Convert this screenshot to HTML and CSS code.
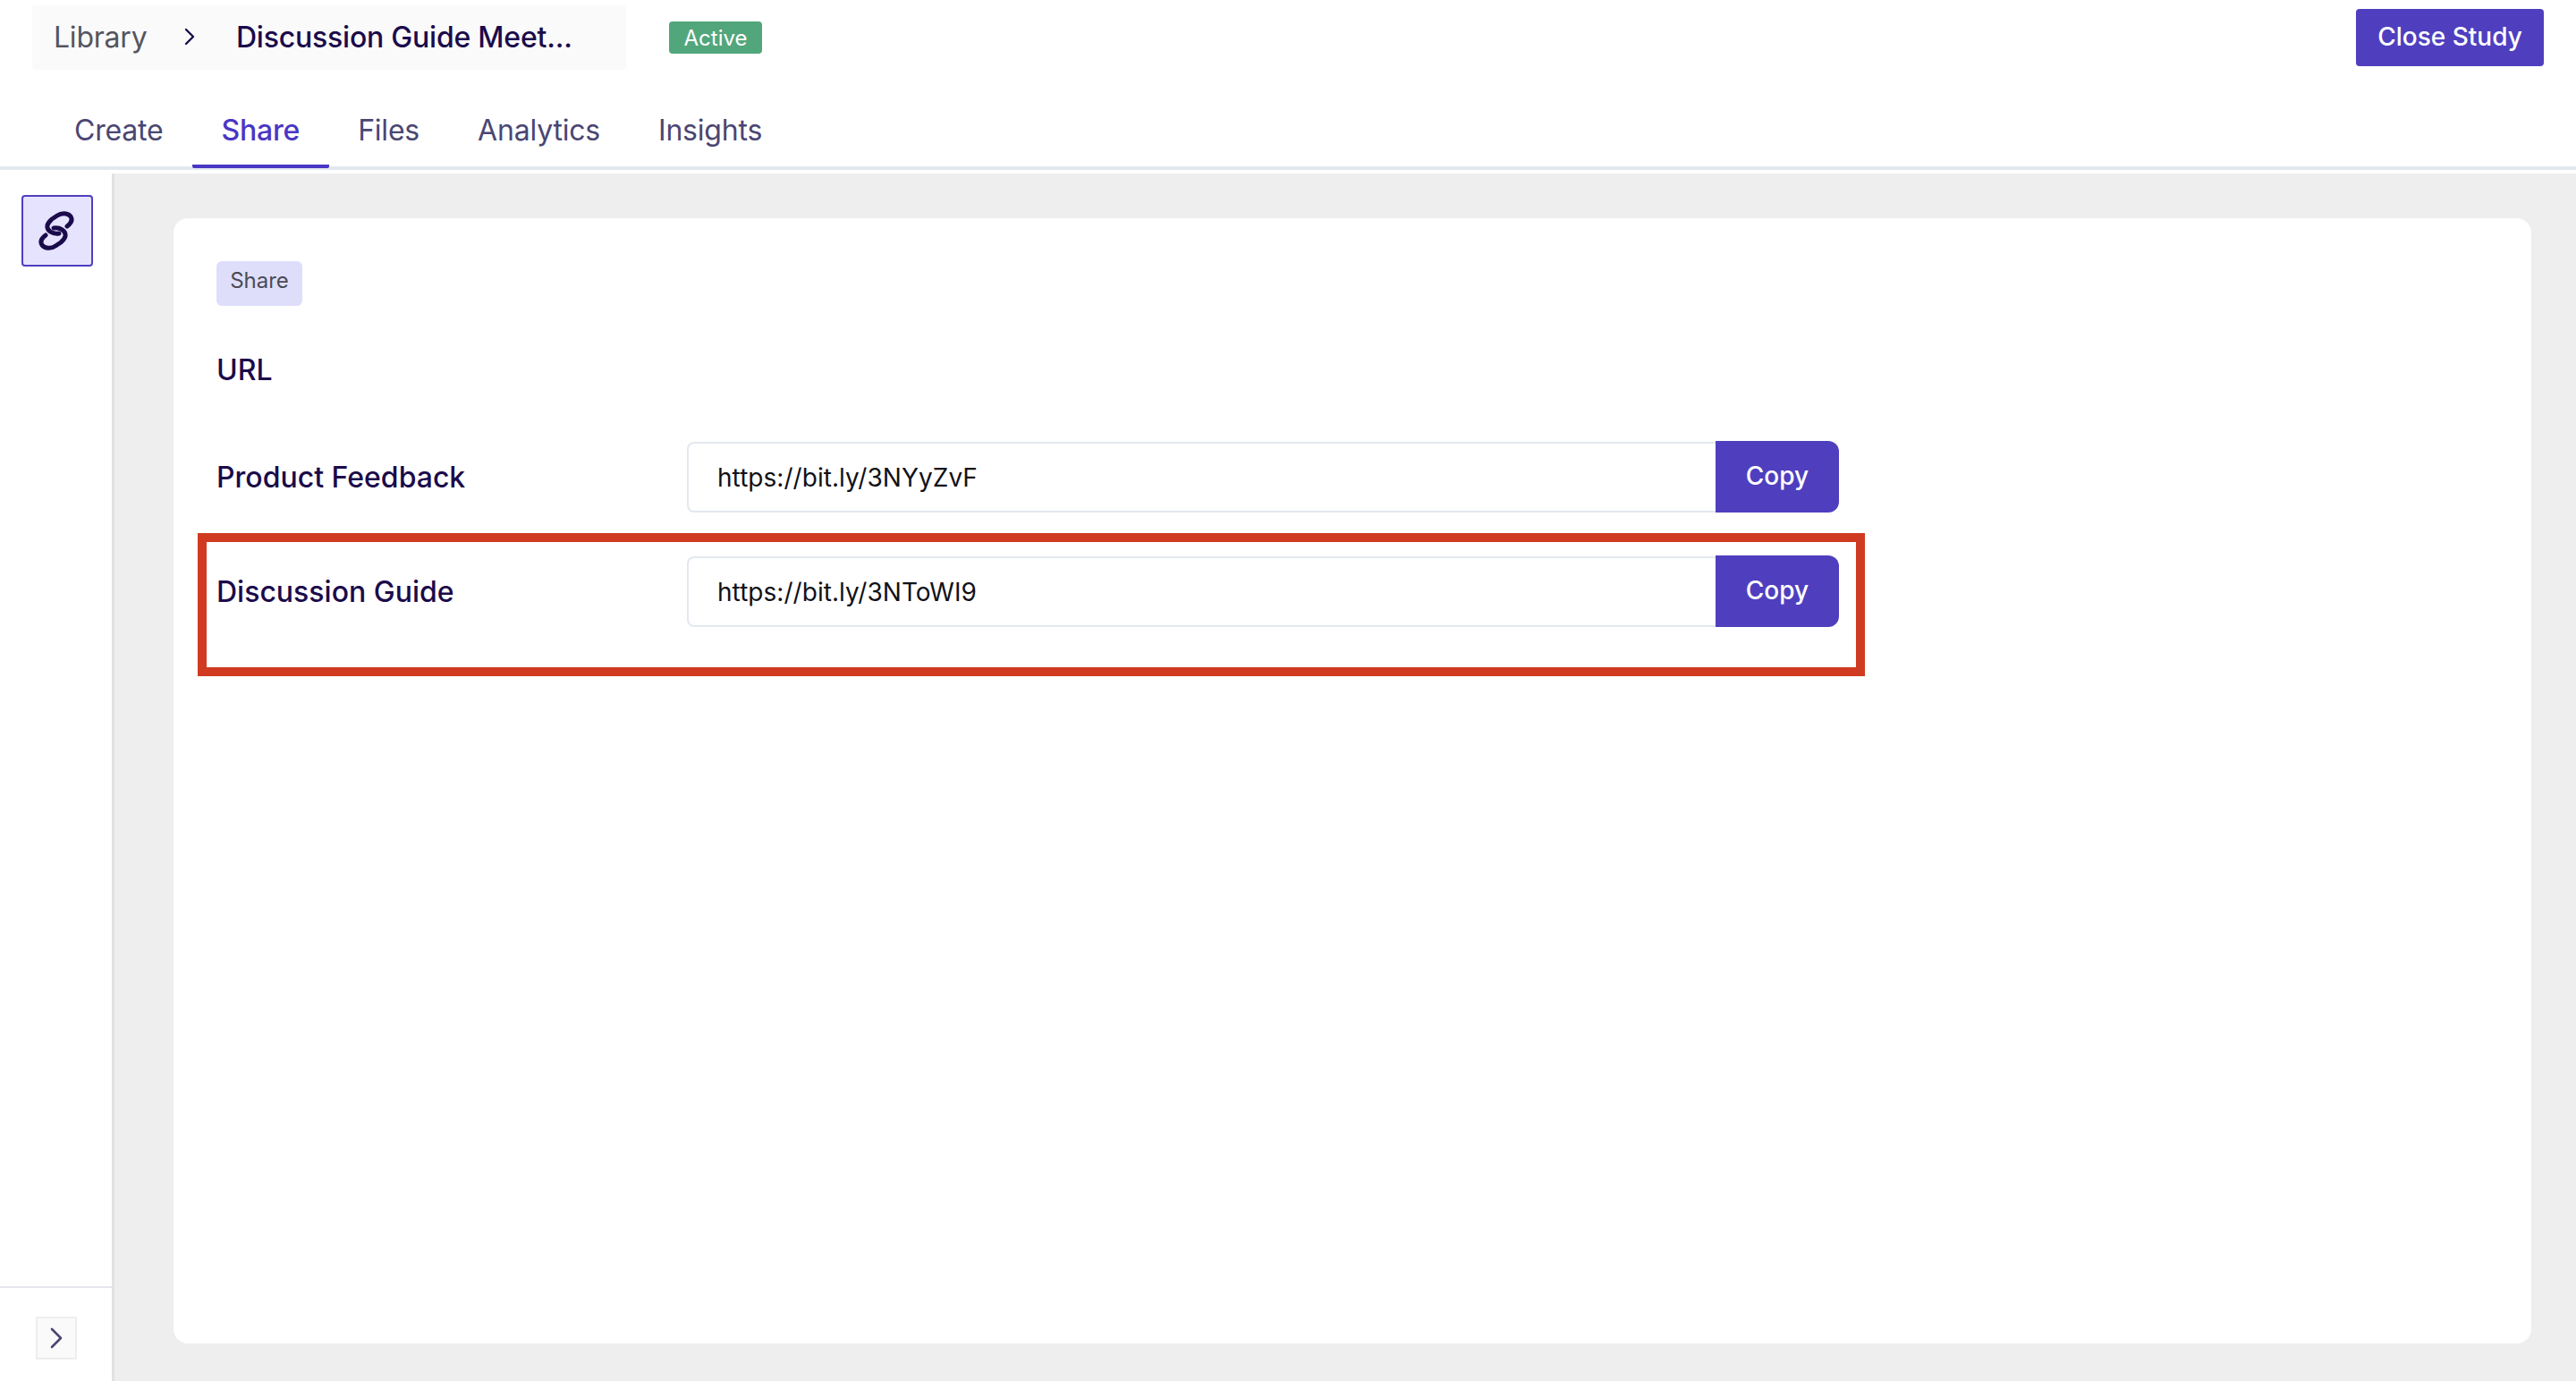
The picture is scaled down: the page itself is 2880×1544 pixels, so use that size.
FILE: index.html
```html
<!DOCTYPE html>
<html lang="en">
<head>
<meta charset="utf-8">
<title>Discussion Guide Meeting - Share</title>
<link rel="stylesheet" href="styles.css">
</head>
<body>
<div class="app">
  <header class="header">
    <div class="topbar">
      <nav class="crumbs">
        <span class="crumb-root">Library</span>
        <svg class="crumb-sep" viewBox="0 0 12 20" width="12" height="20"><path d="M2 2l8 8-8 8" fill="none" stroke="#1b0b4b" stroke-width="2.4" stroke-linecap="round" stroke-linejoin="round"/></svg>
        <span class="crumb-current">Discussion Guide Meet...</span>
      </nav>
      <span class="status">Active</span>
      <button class="close-btn">Close Study</button>
    </div>
    <div class="tabs">
      <a class="tab">Create</a>
      <a class="tab tab-active">Share</a>
      <a class="tab">Files</a>
      <a class="tab">Analytics</a>
      <a class="tab">Insights</a>
    </div>
  </header>
  <div class="body">
    <aside class="sidebar">
      <div class="side-top">
        <button class="side-link">
          <svg viewBox="0 0 50 52" width="50" height="52" fill="none" stroke="#1b0b4b" stroke-width="5" stroke-linecap="round" stroke-linejoin="round">
            <path d="M27 29C20 30 13 26 14 20C14.500 17 17 15 19 13L25 9C30 5.500 37 6 40 10C42.500 14 40 18 36 21"/>
            <path d="M21 23C28 22 35 26 34 32C33.500 35 31 37 29 39L23 43C18 46.500 11 46 8 42C5.500 38 8 34 12 31"/>
          </svg>
        </button>
      </div>
      <div class="side-bottom">
        <button class="side-toggle">
          <svg viewBox="0 0 14 24" width="14" height="24"><path d="M2 2l10 10L2 22" fill="none" stroke="#4a4672" stroke-width="2.6" stroke-linecap="round" stroke-linejoin="round"/></svg>
        </button>
      </div>
    </aside>
    <main class="main">
      <section class="card">
        <span class="tag">Share</span>
        <h2 class="heading">URL</h2>
        <div class="rows">
          <div class="row">
            <label class="row-label">Product Feedback</label>
            <div class="field">
              <span class="field-value">https://bit.ly/3NYyZvF</span>
              <button class="copy">Copy</button>
            </div>
          </div>
          <div class="row">
            <label class="row-label">Discussion Guide</label>
            <div class="field">
              <span class="field-value">https://bit.ly/3NToWI9</span>
              <button class="copy">Copy</button>
            </div>
            <div class="highlight"></div>
          </div>
        </div>
      </section>
    </main>
  </div>
</div>
</body>
</html>
```
FILE: styles.css
```css
* { box-sizing: border-box; }
html, body { margin: 0; padding: 0; height: 100%; }
body { font-family: Inter, "Liberation Sans", sans-serif; background: #fff; color: #1b0b4b; overflow: hidden; }
button { font-family: inherit; border: 0; cursor: pointer; }
.app { height: 1544px; display: flex; flex-direction: column; }

.header { height: 190px; flex: none; border-bottom: 4px solid #e3e8ef; }
.topbar { height: 84px; display: flex; align-items: flex-start; padding: 6px 36px 0; }
.crumbs { width: 664px; height: 72px; background: #fafafa; border-radius: 4px; display: flex; align-items: center; padding: 0 0 2px 24px; letter-spacing: -0.22px; }
.crumb-root { font-size: 32px; color: #55555f; width: 146px; }
.crumb-sep { flex: none; margin-right: 46px; }
.crumb-current { font-size: 32px; font-weight: 500; color: #1b0b4b; white-space: nowrap; }
.status { margin: 18px 0 0 48px; width: 104px; height: 36px; background: #52a67c; color: #fff; border-radius: 4px; font-size: 24px; display: flex; align-items: center; justify-content: center; }
.close-btn { margin: 4px 0 0 auto; width: 210px; height: 64px; background: #4f3fbf; color: #fff; border-radius: 4px; font-size: 28px; font-weight: 500; padding: 0 0 2px; }

.tabs { height: 102px; display: flex; padding-left: 51px; }
.tab { height: 104px; padding: 40px 33px 0 32px; font-size: 32px; line-height: 44px; letter-spacing: -0.2px; color: #4a4672; }
.tab-active { color: #4a36c4; font-weight: 500; border-bottom: 4px solid #4a36c4; border-radius: 0 0 2px 2px; }

.body { flex: 1; display: flex; min-height: 0; padding-top: 4px; }
.sidebar { width: 128px; flex: none; border-right: 3px solid #e2e2e2; display: flex; flex-direction: column; justify-content: space-between; background: #fff; }
.side-top { padding: 24px 22px 0 24px; }
.side-link { width: 80px; height: 80px; padding: 0; background: #e6e3ff; border: 2px solid #4f3fbf; border-radius: 4px; display: flex; align-items: center; justify-content: center; }
.side-bottom { height: 106px; border-top: 2px solid #e8e6ec; padding: 32px 0 0 40px; }
.side-toggle { width: 46px; height: 48px; padding: 0; background: #fafafa; border: 2px solid #eeeeee; display: flex; align-items: center; justify-content: center; }

.main { flex: 1; background: #eeeeee; padding: 50px 50px 42px 66px; min-width: 0; }
.card { height: 100%; background: #fff; border-radius: 16px; padding: 48px; }
.tag { display: flex; height: 50px; width: 96px; justify-content: center; padding-top: 6px; background: #dedefb; border-radius: 6px; font-size: 24px; line-height: 32px; color: #4a4a55; }
.heading { margin: 50px 0 0; font-size: 32px; line-height: 44px; font-weight: 500; color: #1b0b4b; }
.rows { margin-top: 57px; display: flex; flex-direction: column; gap: 48px; width: 1814px; }
.row { position: relative; display: flex; align-items: center; height: 80px; }
.row-label { width: 526px; flex: none; font-size: 32px; font-weight: 500; color: #1b0b4b; }
.field { width: 1288px; height: 80px; display: flex; }
.field-value { flex: 1; height: 79px; margin-top: 1px; border: 2px solid #e3e8ef; border-right: 0; border-radius: 8px 0 0 8px; padding-left: 32px; font-size: 28px; line-height: 76px; letter-spacing: 0.05px; color: #111118; }
.copy { width: 138px; height: 80px; background: #4f3fbf; color: #fff; font-size: 28px; font-weight: 500; border-radius: 0 12px 12px 0; padding: 0 0 2px; }
.highlight { position: absolute; left: -21px; top: -25px; width: 1864px; height: 160px; border: 10px solid #cf3a20; pointer-events: none; }
```
